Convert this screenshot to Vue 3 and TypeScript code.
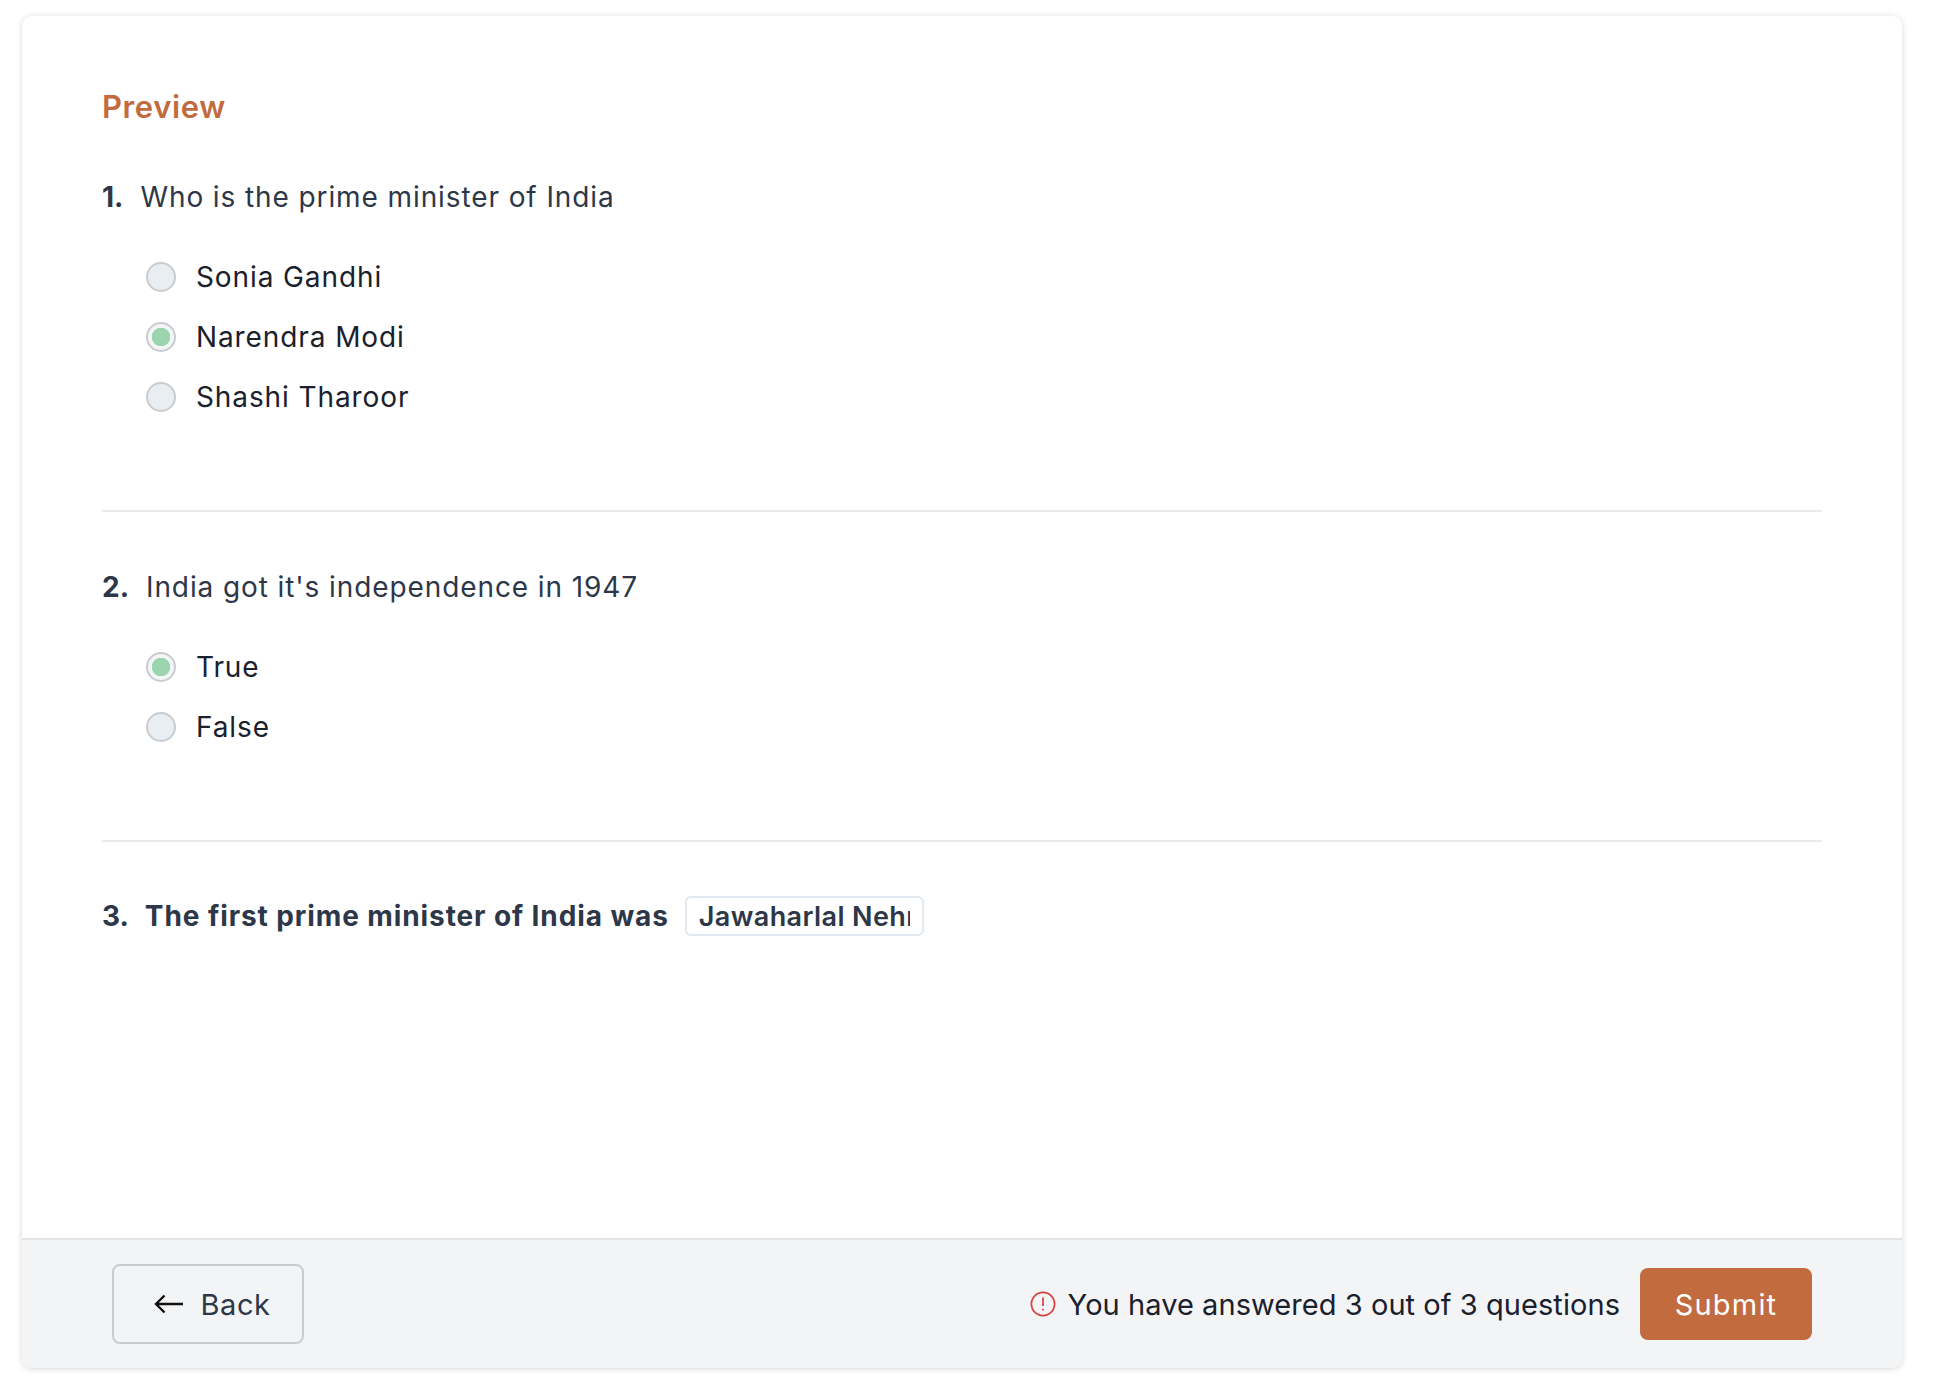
<script setup lang="ts">
interface Question {
  id: number
  text: string
  options: string[]
  selected: string
}

const questions: Question[] = [
  {
    id: 1,
    text: 'Who is the prime minister of India',
    options: ['Sonia Gandhi', 'Narendra Modi', 'Shashi Tharoor'],
    selected: 'Narendra Modi',
  },
  {
    id: 2,
    text: "India got it's independence in 1947",
    options: ['True', 'False'],
    selected: 'True',
  },
]
</script>

<template>
  <div class="page">
    <main class="card">
      <section class="content">
        <h1 class="title">Preview</h1>
        <div v-for="q in questions" :key="q.id" class="question">
          <p class="q-line"><b class="num">{{ q.id }}.</b><span>{{ q.text }}</span></p>
          <ul class="options">
            <li v-for="o in q.options" :key="o" class="option">
              <span class="radio" :class="{ on: o === q.selected }"></span>
              <span>{{ o }}</span>
            </li>
          </ul>
        </div>
        <div class="fill">
          <b class="num">3.</b>
          <b class="fill-text">The first prime minister of India was</b>
          <input class="blank" value="Jawaharlal Nehru" readonly />
        </div>
      </section>
      <footer class="footer">
        <button class="back" type="button">
          <svg width="30" height="20" viewBox="0 0 30 20" fill="none" stroke="#111" stroke-width="2.4">
            <path d="M29 10H2.5M10.5 1.5 2 10l8.5 8.5" />
          </svg>
          <span>Back</span>
        </button>
        <div class="status">
          <svg width="26" height="26" viewBox="0 0 26 26" fill="none" stroke="#dc3f3f" stroke-width="1.7">
            <circle cx="13" cy="13" r="11.6" />
            <path d="M13 6.5v8.5M13 17.8v1.8" />
          </svg>
          <span class="status-text">You have answered 3 out of 3 questions</span>
          <button class="submit" type="button">Submit</button>
        </div>
      </footer>
    </main>
  </div>
</template>

<style>
body {
  margin: 0;
  background: #fff;
}
</style>

<style scoped>
.page {
  padding: 16px 36px 30px 22px;
  font-family: Inter, "Open Sans", sans-serif;
}
.card {
  height: 1352px;
  display: flex;
  flex-direction: column;
  border-radius: 10px;
  overflow: hidden;
  background: #fff;
  box-shadow: 0 1px 6px rgba(0, 0, 0, 0.16);
}
.content {
  flex: 1;
  padding: 73px 80px 0;
}
.title {
  margin: 0 0 54px;
  font-size: 31px;
  line-height: 36px;
  font-weight: 600;
  letter-spacing: 0.6px;
  color: #c26b3f;
}
.question {
  padding-bottom: 95px;
  margin-bottom: 57px;
  border-bottom: 2px solid #e8eaed;
}
.q-line {
  margin: 0 0 44px;
  display: flex;
  gap: 17px;
  font-size: 28px;
  line-height: 36px;
  letter-spacing: 0.9px;
  color: #2d3748;
}
.num {
  font-weight: 700;
  letter-spacing: 0;
  color: #2d3748;
}
.options {
  list-style: none;
  margin: 0;
  padding: 0 0 0 44px;
  display: flex;
  flex-direction: column;
  gap: 24px;
}
.option {
  display: flex;
  align-items: center;
  gap: 20px;
  height: 36px;
  font-size: 28px;
  letter-spacing: 0.9px;
  color: #1a202c;
}
.radio {
  box-sizing: border-box;
  width: 30px;
  height: 30px;
  border-radius: 50%;
  border: 2px solid #c8ccd0;
  background: #e9eef2;
}
.radio.on {
  background: radial-gradient(circle, #9ad5b0 0 9px, #f3f5f7 9.5px);
}
.fill {
  display: flex;
  align-items: center;
  gap: 16px;
  margin-top: -3px;
  font-size: 28px;
  line-height: 40px;
  color: #2d3748;
}
.fill-text {
  letter-spacing: 0.9px;
}
.blank {
  box-sizing: border-box;
  width: 239px;
  height: 40px;
  padding: 0 12px;
  border: 2px solid #e2e8f0;
  border-radius: 6px;
  font: 600 27px Inter, "Open Sans", sans-serif;
  letter-spacing: 0.4px;
  color: #2d3748;
  background: #fff;
  outline: none;
}
.footer {
  box-sizing: border-box;
  height: 130px;
  display: flex;
  align-items: center;
  justify-content: space-between;
  padding: 0 90px;
  background: #f3f4f6;
  border-top: 2px solid #e2e4e8;
}
.back {
  box-sizing: border-box;
  width: 192px;
  height: 80px;
  padding: 0 0 0 9px;
  display: flex;
  align-items: center;
  justify-content: center;
  gap: 16px;
  border: 2px solid #c9cbce;
  border-radius: 8px;
  background: transparent;
  font: 400 29px Inter, "Open Sans", sans-serif;
  letter-spacing: 0.6px;
  color: #2d3748;
}
.status {
  display: flex;
  align-items: center;
  font-size: 29px;
  color: #1a202c;
}
.status svg {
  margin-right: 12px;
}
.status-text {
  letter-spacing: 0.06px;
}
.submit {
  box-sizing: border-box;
  width: 172px;
  height: 72px;
  margin-left: 20px;
  border: 0;
  border-radius: 8px;
  background: #c26b3f;
  color: #fff;
  font: 400 29px Inter, "Open Sans", sans-serif;
  letter-spacing: 1.2px;
}
</style>
